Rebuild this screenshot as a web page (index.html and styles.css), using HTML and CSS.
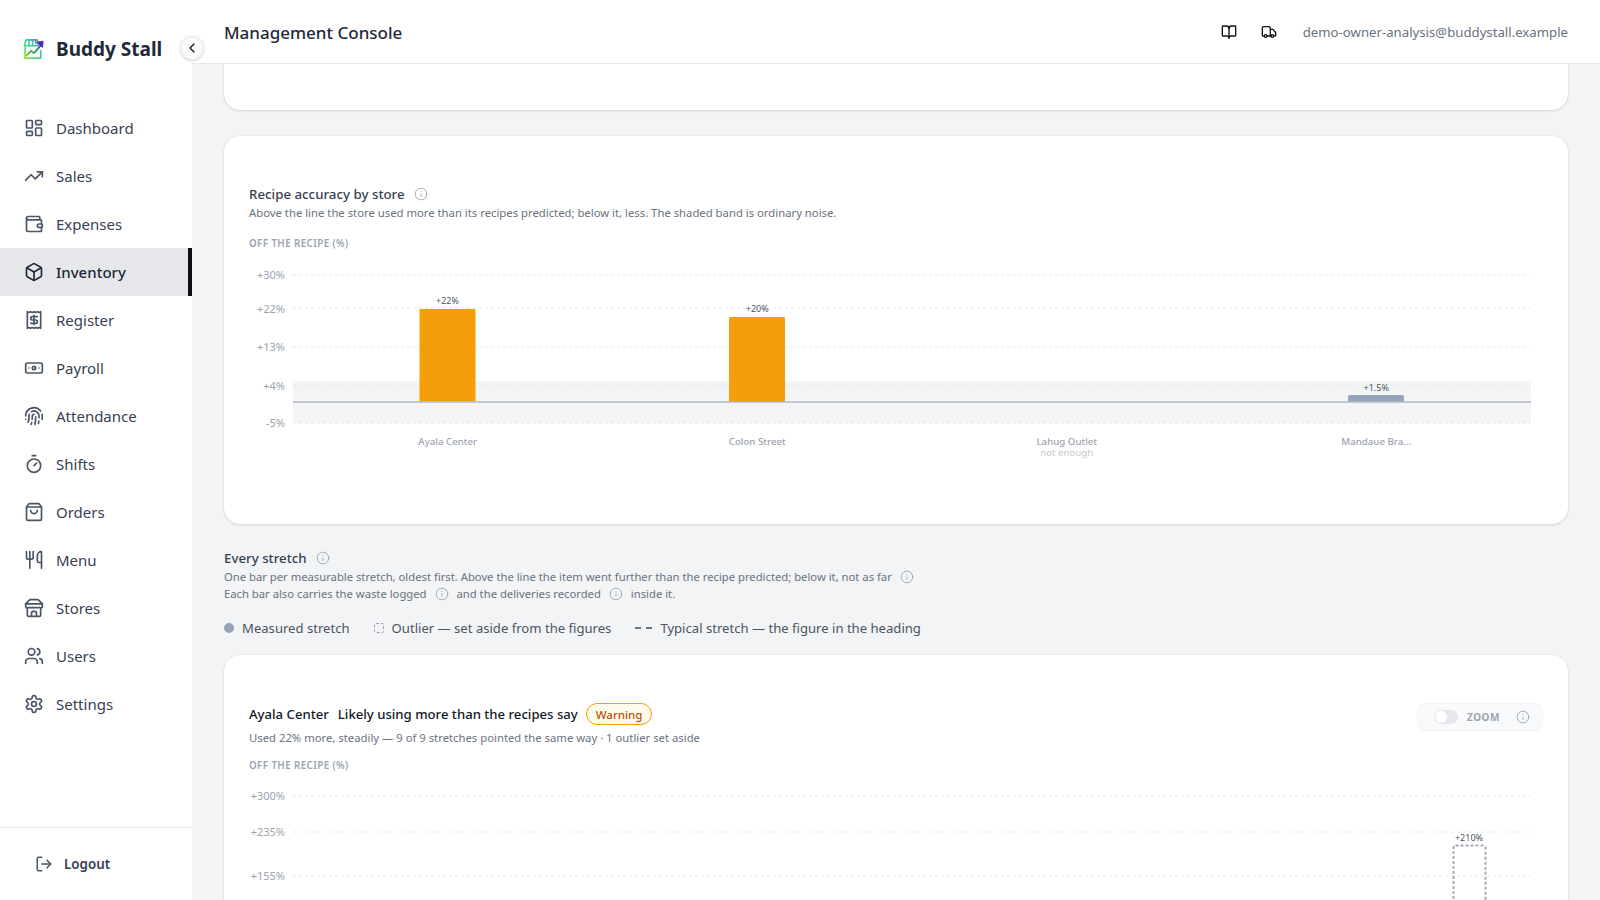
FILE: index.html
```html
<!DOCTYPE html>
<html lang="en">
<head>
  <meta charset="UTF-8">
  <meta name="viewport" content="width=device-width, initial-scale=1.0">
  <title>Buddy Stall - Management Console</title>
  <link rel="stylesheet" href="styles.css">
</head>
<body>
  <svg class="sprite" aria-hidden="true">
    <symbol id="i-dashboard" viewBox="0 0 24 24"><rect x="3" y="3" width="7" height="9" rx="1"/><rect x="14" y="3" width="7" height="5" rx="1"/><rect x="14" y="12" width="7" height="9" rx="1"/><rect x="3" y="16" width="7" height="5" rx="1"/></symbol>
    <symbol id="i-sales" viewBox="0 0 24 24"><polyline points="22 7 13.5 15.5 8.5 10.5 2 17"/><polyline points="16 7 22 7 22 13"/></symbol>
    <symbol id="i-expenses" viewBox="0 0 24 24"><path d="M19 7V4a1 1 0 0 0-1-1H5a2 2 0 0 0 0 4h15a1 1 0 0 1 1 1v4h-3a2 2 0 0 0 0 4h3a1 1 0 0 0 1-1v-2a1 1 0 0 0-1-1"/><path d="M3 5v14a2 2 0 0 0 2 2h15a1 1 0 0 0 1-1v-4"/></symbol>
    <symbol id="i-inventory" viewBox="0 0 24 24"><path d="M21 8a2 2 0 0 0-1-1.73l-7-4a2 2 0 0 0-2 0l-7 4A2 2 0 0 0 3 8v8a2 2 0 0 0 1 1.73l7 4a2 2 0 0 0 2 0l7-4A2 2 0 0 0 21 16Z"/><path d="m3.3 7 8.7 5 8.7-5"/><path d="M12 22V12"/></symbol>
    <symbol id="i-register" viewBox="0 0 24 24"><path d="M4 2v20l2-1 2 1 2-1 2 1 2-1 2 1 2-1 2 1V2l-2 1-2-1-2 1-2-1-2 1-2-1-2 1Z"/><path d="M16 8h-6a2 2 0 1 0 0 4h4a2 2 0 1 1 0 4H8"/><path d="M12 17.5v-11"/></symbol>
    <symbol id="i-payroll" viewBox="0 0 24 24"><rect x="2" y="6" width="20" height="12" rx="2"/><circle cx="12" cy="12" r="2"/><path d="M6 12h.01M18 12h.01"/></symbol>
    <symbol id="i-attendance" viewBox="0 0 24 24"><path d="M12 10a2 2 0 0 0-2 2c0 1.02-.1 2.51-.26 4"/><path d="M14 13.12c0 2.38 0 6.38-1 8.88"/><path d="M17.29 21.02c.12-.6.43-2.3.5-3.02"/><path d="M2 12a10 10 0 0 1 18-6"/><path d="M2 16h.01"/><path d="M21.8 16c.2-2 .131-5.354 0-6"/><path d="M5 19.5C5.5 18 6 15 6 12a6 6 0 0 1 .34-2"/><path d="M8.65 22c.21-.66.45-1.32.57-2"/><path d="M9 6.8a6 6 0 0 1 9 5.2v2"/></symbol>
    <symbol id="i-shifts" viewBox="0 0 24 24"><line x1="10" y1="2" x2="14" y2="2"/><line x1="12" y1="14" x2="15" y2="11"/><circle cx="12" cy="14" r="8"/></symbol>
    <symbol id="i-orders" viewBox="0 0 24 24"><path d="M16 10a4 4 0 0 1-8 0"/><path d="M3.103 6.034h17.794"/><path d="M3.4 5.467a2 2 0 0 0-.4 1.2V20a2 2 0 0 0 2 2h14a2 2 0 0 0 2-2V6.667a2 2 0 0 0-.4-1.2l-2-2.667A2 2 0 0 0 17 2H7a2 2 0 0 0-1.6.8z"/></symbol>
    <symbol id="i-menu" viewBox="0 0 24 24"><path d="M3 2v7c0 1.1.9 2 2 2h4a2 2 0 0 0 2-2V2"/><path d="M7 2v20"/><path d="M21 15V2a5 5 0 0 0-5 5v6c0 1.1.9 2 2 2h3Zm0 0v7"/></symbol>
    <symbol id="i-stores" viewBox="0 0 24 24"><path d="m2 7 4.41-4.41A2 2 0 0 1 7.83 2h8.34a2 2 0 0 1 1.42.59L22 7"/><path d="M4 12v8a2 2 0 0 0 2 2h12a2 2 0 0 0 2-2v-8"/><path d="M15 22v-4a2 2 0 0 0-2-2h-2a2 2 0 0 0-2 2v4"/><path d="M2 7h20"/><path d="M22 7v3a2 2 0 0 1-2 2a2.7 2.7 0 0 1-1.59-.63.7.7 0 0 0-.82 0A2.7 2.7 0 0 1 16 12a2.7 2.7 0 0 1-1.59-.63.7.7 0 0 0-.82 0A2.7 2.7 0 0 1 12 12a2.7 2.7 0 0 1-1.59-.63.7.7 0 0 0-.82 0A2.7 2.7 0 0 1 8 12a2.7 2.7 0 0 1-1.59-.63.7.7 0 0 0-.82 0A2.7 2.7 0 0 1 4 12a2 2 0 0 1-2-2V7"/></symbol>
    <symbol id="i-users" viewBox="0 0 24 24"><path d="M16 21v-2a4 4 0 0 0-4-4H6a4 4 0 0 0-4 4v2"/><circle cx="9" cy="7" r="4"/><path d="M22 21v-2a4 4 0 0 0-3-3.87"/><path d="M16 3.13a4 4 0 0 1 0 7.75"/></symbol>
    <symbol id="i-settings" viewBox="0 0 24 24"><path d="M12.22 2h-.44a2 2 0 0 0-2 2v.18a2 2 0 0 1-1 1.73l-.43.25a2 2 0 0 1-2 0l-.15-.08a2 2 0 0 0-2.73.73l-.22.38a2 2 0 0 0 .73 2.73l.15.1a2 2 0 0 1 1 1.72v.51a2 2 0 0 1-1 1.74l-.15.09a2 2 0 0 0-.73 2.73l.22.38a2 2 0 0 0 2.73.73l.15-.08a2 2 0 0 1 2 0l.43.25a2 2 0 0 1 1 1.73V20a2 2 0 0 0 2 2h.44a2 2 0 0 0 2-2v-.18a2 2 0 0 1 1-1.73l.43-.25a2 2 0 0 1 2 0l.15.08a2 2 0 0 0 2.73-.73l.22-.39a2 2 0 0 0-.73-2.73l-.15-.08a2 2 0 0 1-1-1.74v-.5a2 2 0 0 1 1-1.74l.15-.09a2 2 0 0 0 .73-2.73l-.22-.38a2 2 0 0 0-2.73-.73l-.15.08a2 2 0 0 1-2 0l-.43-.25a2 2 0 0 1-1-1.73V4a2 2 0 0 0-2-2z"/><circle cx="12" cy="12" r="3"/></symbol>
    <symbol id="i-logout" viewBox="0 0 24 24"><path d="M9 21H5a2 2 0 0 1-2-2V5a2 2 0 0 1 2-2h4"/><polyline points="16 17 21 12 16 7"/><line x1="21" y1="12" x2="9" y2="12"/></symbol>
    <symbol id="i-book" viewBox="0 0 24 24"><path d="M12 7v14"/><path d="M3 18a1 1 0 0 1-1-1V4a1 1 0 0 1 1-1h5a4 4 0 0 1 4 4 4 4 0 0 1 4-4h5a1 1 0 0 1 1 1v13a1 1 0 0 1-1 1h-6a3 3 0 0 0-3 3 3 3 0 0 0-3-3z"/></symbol>
    <symbol id="i-truck" viewBox="0 0 24 24"><path d="M14 18V6a2 2 0 0 0-2-2H4a2 2 0 0 0-2 2v11a1 1 0 0 0 1 1h2"/><path d="M15 18H9"/><path d="M19 18h2a1 1 0 0 0 1-1v-3.65a1 1 0 0 0-.22-.624l-3.48-4.35A1 1 0 0 0 17.52 8H14"/><circle cx="17" cy="18" r="2"/><circle cx="7" cy="18" r="2"/></symbol>
    <symbol id="i-info" viewBox="0 0 24 24"><circle cx="12" cy="12" r="10"/><path d="M12 16v-4"/><path d="M12 8h.01"/></symbol>
    <symbol id="i-chevron" viewBox="0 0 24 24"><path d="m15 18-6-6 6-6"/></symbol>
  </svg>

  <aside class="sidebar">
    <div class="brand">
      <svg class="brand-logo" viewBox="0 0 24 24" fill="none" stroke-width="1.800" stroke-linecap="round" stroke-linejoin="round">
        <defs>
          <linearGradient id="logoStall" gradientUnits="userSpaceOnUse" x1="1" y1="22" x2="22" y2="2">
            <stop offset="0" stop-color="#a3e635"/>
            <stop offset="0.55" stop-color="#34d399"/>
            <stop offset="1" stop-color="#7c6fd6"/>
          </linearGradient>
          <linearGradient id="logoArrow" gradientUnits="userSpaceOnUse" x1="3" y1="20" x2="23" y2="3">
            <stop offset="0" stop-color="#84cc16"/>
            <stop offset="0.5" stop-color="#22a06b"/>
            <stop offset="1" stop-color="#5b21b6"/>
          </linearGradient>
        </defs>
        <path d="M3.500 9.500 3 22h17.500v-8" stroke="url(#logoStall)"/>
        <path d="M4.500 2h12l1.500 6.500H2.500z" stroke="url(#logoStall)"/>
        <path d="M8 2.500 7.300 8M11.500 2.500V8M14.500 2.500 15 6" stroke="url(#logoStall)"/>
        <path d="M5 19l5-5 3 2.500 9-10" stroke="url(#logoArrow)" stroke-width="2"/>
        <path d="M16.500 4.500 23 3.500 22.500 10z" fill="#5b21b6" stroke="#5b21b6" stroke-width="1"/>
      </svg>
      <span class="brand-name">Buddy Stall</span>
    </div>
    <button class="collapse-btn"><svg class="icon"><use href="#i-chevron"/></svg></button>
    <nav class="nav">
      <a class="nav-item"><svg class="icon"><use href="#i-dashboard"/></svg>Dashboard</a>
      <a class="nav-item"><svg class="icon"><use href="#i-sales"/></svg>Sales</a>
      <a class="nav-item"><svg class="icon"><use href="#i-expenses"/></svg>Expenses</a>
      <a class="nav-item active"><svg class="icon"><use href="#i-inventory"/></svg>Inventory</a>
      <a class="nav-item"><svg class="icon"><use href="#i-register"/></svg>Register</a>
      <a class="nav-item"><svg class="icon"><use href="#i-payroll"/></svg>Payroll</a>
      <a class="nav-item"><svg class="icon"><use href="#i-attendance"/></svg>Attendance</a>
      <a class="nav-item"><svg class="icon"><use href="#i-shifts"/></svg>Shifts</a>
      <a class="nav-item"><svg class="icon"><use href="#i-orders"/></svg>Orders</a>
      <a class="nav-item"><svg class="icon"><use href="#i-menu"/></svg>Menu</a>
      <a class="nav-item"><svg class="icon"><use href="#i-stores"/></svg>Stores</a>
      <a class="nav-item"><svg class="icon"><use href="#i-users"/></svg>Users</a>
      <a class="nav-item"><svg class="icon"><use href="#i-settings"/></svg>Settings</a>
    </nav>
    <div class="sidebar-foot">
      <a class="logout"><svg class="icon"><use href="#i-logout"/></svg>Logout</a>
    </div>
  </aside>

  <div class="page">
    <header class="topbar">
      <h1 class="page-title">Management Console</h1>
      <div class="top-actions">
        <svg class="icon top-icon"><use href="#i-book"/></svg>
        <svg class="icon top-icon"><use href="#i-truck"/></svg>
        <span class="top-email">demo-owner-analysis@buddystall.example</span>
      </div>
    </header>

    <main class="content">
      <div class="card card-stub"></div>

      <section class="card card-stores">
        <h2 class="card-title">Recipe accuracy by store <svg class="icon info"><use href="#i-info"/></svg></h2>
        <p class="card-desc">Above the line the store used more than its recipes predicted; below it, less. The shaded band is ordinary noise.</p>
        <div class="axis-title">OFF THE RECIPE (%)</div>
        <svg class="chart chart-stores" viewBox="0 0 1294 240">
          <rect class="band" x="44" y="121" width="1238" height="42"/>
          <line class="grid" x1="44" y1="15" x2="1282" y2="15"/>
          <line class="grid" x1="44" y1="48" x2="1282" y2="48"/>
          <line class="grid" x1="44" y1="87" x2="1282" y2="87"/>
          <line class="grid" x1="44" y1="125" x2="1282" y2="125"/>
          <line class="grid" x1="44" y1="163" x2="1282" y2="163"/>
          <text class="tick" x="36" y="19">+30%</text>
          <text class="tick" x="36" y="53">+22%</text>
          <text class="tick" x="36" y="91">+13%</text>
          <text class="tick" x="36" y="130">+4%</text>
          <text class="tick" x="36" y="167">-5%</text>
          <path class="bar-warn" d="M170.500 50a1 1 0 0 1 1-1h54a1 1 0 0 1 1 1v91.500h-56z"/>
          <path class="bar-warn" d="M480 58a1 1 0 0 1 1-1h54a1 1 0 0 1 1 1v84h-56z"/>
          <path class="bar-ok" d="M1099 137a2 2 0 0 1 2-2h52a2 2 0 0 1 2 2v5h-56z"/>
          <line class="zero" x1="44" y1="142" x2="1282" y2="142"/>
          <text class="val" x="198.500" y="44">+22%</text>
          <text class="val" x="508.250" y="52">+20%</text>
          <text class="val" x="1127.250" y="131">+1.5%</text>
          <text class="cat" x="198.750" y="185">Ayala Center</text>
          <text class="cat" x="508.250" y="185">Colon Street</text>
          <text class="cat" x="817.750" y="185">Lahug Outlet</text>
          <text class="cat cat-sub" x="817.750" y="196">not enough</text>
          <text class="cat" x="1127.250" y="185">Mandaue Bra...</text>
        </svg>
      </section>

      <section class="stretch-head">
        <h2 class="card-title">Every stretch <svg class="icon info"><use href="#i-info"/></svg></h2>
        <p class="stretch-desc">One bar per measurable stretch, oldest first. Above the line the item went further than the recipe predicted; below it, not as far <svg class="icon info"><use href="#i-info"/></svg></p>
        <p class="stretch-desc">Each bar also carries the waste logged <svg class="icon info"><use href="#i-info"/></svg> and the deliveries recorded <svg class="icon info"><use href="#i-info"/></svg> inside it.</p>
        <div class="legend">
          <span class="legend-item"><i class="key-dot"></i>Measured stretch</span>
          <span class="legend-item"><i class="key-outlier"></i>Outlier — set aside from the figures</span>
          <span class="legend-item"><i class="key-typical"></i>Typical stretch — the figure in the heading</span>
        </div>
      </section>

      <section class="card card-item">
        <div class="item-head">
          <div>
            <div class="item-title">
              <span class="item-store">Ayala Center</span>
              <span class="item-verdict">Likely using more than the recipes say</span>
              <span class="badge">Warning</span>
            </div>
            <p class="item-desc">Used 22% more, steadily — 9 of 9 stretches pointed the same way · 1 outlier set aside</p>
          </div>
          <div class="zoom-box">
            <span class="switch"><i></i></span>
            <span class="zoom-label">ZOOM</span>
            <svg class="icon info"><use href="#i-info"/></svg>
          </div>
        </div>
        <div class="axis-title axis-item">OFF THE RECIPE (%)</div>
        <svg class="chart chart-item" viewBox="0 0 1294 200">
          <line class="grid" x1="44" y1="16" x2="1282" y2="16"/>
          <line class="grid" x1="44" y1="52" x2="1282" y2="52"/>
          <line class="grid" x1="44" y1="96" x2="1282" y2="96"/>
          <text class="tick" x="36" y="20">+300%</text>
          <text class="tick" x="36" y="56">+235%</text>
          <text class="tick" x="36" y="100">+155%</text>
          <rect class="bar-outlier" x="1204.500" y="65.500" width="32" height="130" rx="2"/>
          <text class="val" x="1220" y="61">+210%</text>
        </svg>
      </section>
    </main>
  </div>
</body>
</html>
```

FILE: styles.css
```css
* {
  box-sizing: border-box;
  margin: 0;
  padding: 0;
}
body {
  display: flex;
  height: 100vh;
  overflow: hidden;
  background-color: #f3f4f6;
  color: #1f2937;
  font-family: 'Noto Sans', sans-serif;
}
.sprite {
  display: none;
}
.icon {
  width: 20px;
  height: 20px;
  flex-shrink: 0;
  fill: none;
  stroke: currentColor;
  stroke-width: 2;
  stroke-linecap: round;
  stroke-linejoin: round;
}

/* sidebar */
.sidebar {
  position: relative;
  z-index: 2;
  width: 192px;
  flex-shrink: 0;
  display: flex;
  flex-direction: column;
  background-color: #fff;
}
.brand {
  height: 104px;
  display: flex;
  align-items: center;
  gap: 12px;
  padding: 0 0 6px 22px;
}
.brand-logo {
  width: 22px;
  height: 22px;
}
.brand-name {
  font-size: 19px;
  font-weight: 700;
  color: #1f2937;
}
.collapse-btn {
  position: absolute;
  top: 36px;
  right: -12px;
  width: 24px;
  height: 24px;
  display: flex;
  align-items: center;
  justify-content: center;
  border: 1px solid #e5e7eb;
  border-radius: 50%;
  background-color: #f9fafb;
  color: #111827;
  box-shadow: 0 1px 3px rgba(0,0,0,0.15);
}
.collapse-btn .icon {
  width: 16px;
  height: 16px;
}
.nav {
  display: flex;
  flex-direction: column;
}
.nav-item {
  height: 48px;
  display: flex;
  align-items: center;
  gap: 12px;
  padding-left: 24px;
  font-size: 15px;
  color: #374151;
}
.nav-item .icon {
  color: #4b5563;
}
.nav-item.active {
  background-color: #e5e7eb;
  border-right: 4px solid #111;
  font-weight: 500;
  color: #1f2937;
}
.nav-item.active .icon {
  color: #1f2937;
}
.sidebar-foot {
  margin-top: auto;
  height: 73px;
  border-top: 1px solid #e5e7eb;
  display: flex;
  align-items: center;
  padding-left: 35px;
}
.logout {
  display: flex;
  align-items: center;
  gap: 11px;
  font-size: 13.400px;
  font-weight: 600;
  color: #374151;
}
.logout .icon {
  width: 18px;
  height: 18px;
  color: #4b5563;
}

/* top bar */
.page {
  flex: 1;
  min-width: 0;
  display: flex;
  flex-direction: column;
}
.topbar {
  height: 64px;
  flex-shrink: 0;
  display: flex;
  align-items: center;
  justify-content: space-between;
  padding: 0 32px;
  background-color: #fff;
  border-bottom: 1px solid #e5e7eb;
}
.page-title {
  padding-top: 1px;
  font-size: 17px;
  font-weight: 500;
  color: #1f2937;
}
.top-actions {
  display: flex;
  align-items: center;
  gap: 24px;
}
.top-icon {
  width: 16px;
  height: 16px;
  color: #111;
}
.top-email {
  margin-left: 2px;
  font-size: 13.200px;
  color: #6b7280;
}

/* content */
.content {
  flex: 1;
  min-height: 0;
  overflow: hidden;
  padding: 0 32px;
}
.card {
  background-color: #fff;
  border-radius: 16px;
  box-shadow: 0 1px 3px rgba(0,0,0,0.12), 0 0 1px rgba(0,0,0,0.12);
  padding: 48px 25px 24px;
}
.card-stub {
  height: 46px;
  padding: 0;
  border-radius: 0 0 16px 16px;
  margin-bottom: 26px;
}
.card-title {
  display: flex;
  align-items: center;
  gap: 9px;
  font-size: 13.300px;
  line-height: 20px;
  font-weight: 500;
  color: #374151;
}
.info {
  width: 14px;
  height: 14px;
  color: #9ca3af;
  stroke-width: 1.500;
}
.card-desc {
  margin-top: 1px;
  font-size: 11.300px;
  line-height: 16px;
  color: #6b7280;
}
.axis-title {
  margin-top: 14px;
  font-size: 9.800px;
  line-height: 17px;
  font-weight: 600;
  letter-spacing: 0.4px;
  color: #9ca3af;
}
.chart {
  display: block;
  width: 100%;
  margin-top: 8px;
}
.chart-stores {
  height: 240px;
}
.chart-item {
  height: 200px;
  margin-top: 6px;
}
.chart .band {
  fill: #f3f4f6;
}
.chart .grid {
  stroke: #e5e7eb;
  stroke-dasharray: 3 3;
}
.chart .zero {
  stroke: #b4b8c5;
  stroke-width: 1.500;
}
.chart .tick {
  font-size: 11px;
  fill: #9ca3af;
  text-anchor: end;
}
.chart .val {
  font-size: 9px;
  fill: #4b5563;
  text-anchor: middle;
}
.chart .cat {
  font-size: 9.700px;
  font-weight: 500;
  fill: #9ca3af;
  text-anchor: middle;
}
.chart .cat-sub {
  font-weight: 400;
  fill: #c4c8d0;
}
.bar-warn {
  fill: #f59e0b;
}
.bar-ok {
  fill: #94a3b8;
}
.bar-outlier {
  fill: none;
  stroke: #a5abbd;
  stroke-width: 2;
  stroke-dasharray: 3 2;
}

/* every stretch */
.stretch-head {
  margin-top: 24px;
}
.stretch-desc {
  display: flex;
  align-items: center;
  gap: 8px;
  font-size: 11.250px;
  line-height: 17px;
  color: #6b7280;
}
.legend {
  display: flex;
  align-items: center;
  gap: 24px;
  margin-top: 16px;
  font-size: 13.100px;
  line-height: 20px;
  color: #4b5563;
}
.legend-item {
  display: flex;
  align-items: center;
  gap: 8px;
}
.key-dot {
  width: 10px;
  height: 10px;
  border-radius: 50%;
  background-color: #94a3b8;
}
.key-outlier {
  width: 10px;
  height: 10px;
  border: 1px dashed #9ca3af;
  border-radius: 2px;
}
.key-typical {
  width: 17px;
  height: 0;
  border-top: 2px dashed #6b7280;
}

/* item card */
.card-item {
  margin-top: 17px;
}
.item-head {
  display: flex;
  align-items: flex-start;
  justify-content: space-between;
}
.item-title {
  display: flex;
  align-items: center;
  height: 22px;
  font-size: 13.150px;
  font-weight: 500;
  color: #111827;
}
.item-verdict {
  margin-left: 9px;
}
.badge {
  margin-left: 8px;
  height: 22px;
  padding: 0 9px;
  display: flex;
  align-items: center;
  border: 1px solid #f59e0b;
  border-radius: 11px;
  background-color: #fffbeb;
  font-size: 11.500px;
  color: #b45309;
}
.item-desc {
  margin-top: 5px;
  font-size: 11.300px;
  line-height: 16px;
  color: #6b7280;
}
.zoom-box {
  width: 126px;
  height: 28px;
  display: flex;
  align-items: center;
  padding-left: 16px;
  border: 1px solid #f3f4f6;
  border-radius: 10px;
  background-color: #f9fafb;
}
.switch {
  width: 24px;
  height: 14px;
  border-radius: 7px;
  background-color: #e5e7eb;
  padding: 1px;
}
.switch i {
  display: block;
  width: 12px;
  height: 12px;
  border-radius: 50%;
  background-color: #fff;
}
.zoom-label {
  margin-left: 9px;
  font-size: 10px;
  font-weight: 700;
  letter-spacing: 0.5px;
  color: #9ca3af;
}
.zoom-box .info {
  margin-left: 16px;
}
.axis-item {
  margin-top: 11px;
}
```
